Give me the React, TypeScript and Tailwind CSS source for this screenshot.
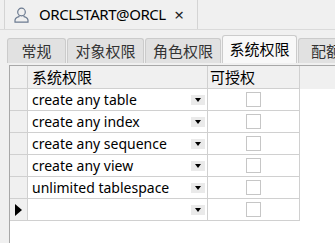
const rows = [
  "create any table",
  "create any index",
  "create any sequence",
  "create any view",
  "unlimited tablespace",
];

const tabs = [
  { label: "常规", w: "w-[59px]" },
  { label: "对象权限", w: "w-[77px]" },
  { label: "角色权限", w: "w-[76px]" },
];

const font = "font-['Noto_Sans','Noto_Sans_CJK_SC',sans-serif]";

const DropBtn = () => (
  <div className="mr-[2px] flex h-[10px] w-[14px] items-center justify-center bg-[#eaeaea]">
    <div className="h-0 w-0 border-x-[3px] border-t-[4px] border-x-transparent border-t-black" />
  </div>
);

const Check = () => <div className="h-[15px] w-[15px] border border-[#c6c6c6] bg-white" />;

const UserIcon = () => (
  <svg width="15" height="16" viewBox="0 0 15 16" fill="none" stroke="#6b7a90" strokeWidth="1.2">
    <circle cx="7.5" cy="5" r="3.8" />
    <path d="M5 8.6 L5 9.6 C2.5 10.4 1 11.8 1 13.2 L1 15.2 L14 15.2 L14 13.2 C14 11.8 12.5 10.4 10 9.6 L10 8.6" />
  </svg>
);

export default function App() {
  return (
    <div className={`relative h-[243px] w-[335px] overflow-hidden bg-[#f0f0f0] text-black ${font}`}>
      {/* document tab */}
      <div className="flex h-[30px] border-b border-[#dadada]">
        <div className="w-[4px]" />
        <div className="flex w-[194px] items-center border-x border-[#d4d4d4] bg-[#f0f0f0]">
          <div className="ml-[9px] mr-[10px] flex">
            <UserIcon />
          </div>
          <span className="text-[15px] leading-none tracking-[-0.45px]">ORCLSTART@ORCL</span>
          <span className="ml-auto mr-[13px] text-[17px] leading-none text-[#222]">×</span>
        </div>
      </div>

      {/* tab strip */}
      <div className="mt-[5px] flex h-[28px] items-end overflow-hidden pl-[7px]">
        {tabs.map((t) => (
          <div
            key={t.label}
            className={`${t.w} mr-[1px] flex h-[25px] shrink-0 items-center justify-center rounded-t-[3px] border border-b-0 border-[#cbcbcb] bg-[#e1e1e1] text-[15px] leading-none text-[#333]`}
          >
            {t.label}
          </div>
        ))}
        <div className="flex h-[28px] w-[75px] shrink-0 items-center justify-center rounded-t-[3px] border border-b-0 border-[#cbcbcb] bg-[#f8f8f8] text-[15px] leading-none">
          系统权限
        </div>
        <div className="ml-[1px] flex h-[25px] w-[70px] shrink-0 items-center rounded-t-[3px] border border-b-0 border-[#cbcbcb] bg-[#e1e1e1] pl-[12px] text-[15px] leading-none text-[#333]">
          配额
        </div>
      </div>

      {/* grid */}
      <div className="ml-[9px] mt-[2px] h-[200px] border-l border-t border-[#a8a8a8] bg-white text-[14px]">
        <div className="flex h-[23px] bg-[#f0f0f0]">
          <div className="w-[18px] border-b border-r border-[#d0d0d0]" />
          <div className="flex w-[180px] items-center border-b border-r border-[#d0d0d0] pl-[4px] text-[15px]">
            系统权限
          </div>
          <div className="flex w-[92px] items-center border-b border-r border-[#d0d0d0] pl-[2px] text-[15px]">
            可授权
          </div>
        </div>
        {[...rows, ""].map((r, i) => (
          <div key={i} className="flex h-[22px]">
            <div className="flex w-[18px] items-center justify-center border-b border-r border-[#d0d0d0] bg-[#f0f0f0]">
              {i === rows.length && (
                <div className="h-0 w-0 border-y-[6px] border-l-[7px] border-y-transparent border-l-black" />
              )}
            </div>
            <div className="flex w-[180px] items-center justify-between border-b border-r border-[#d0d0d0] pl-[4px]">
              <span className="leading-none">{r}</span>
              <DropBtn />
            </div>
            <div className="flex w-[92px] items-center justify-center border-b border-r border-[#d0d0d0]">
              <Check />
            </div>
          </div>
        ))}
      </div>
    </div>
  );
}
